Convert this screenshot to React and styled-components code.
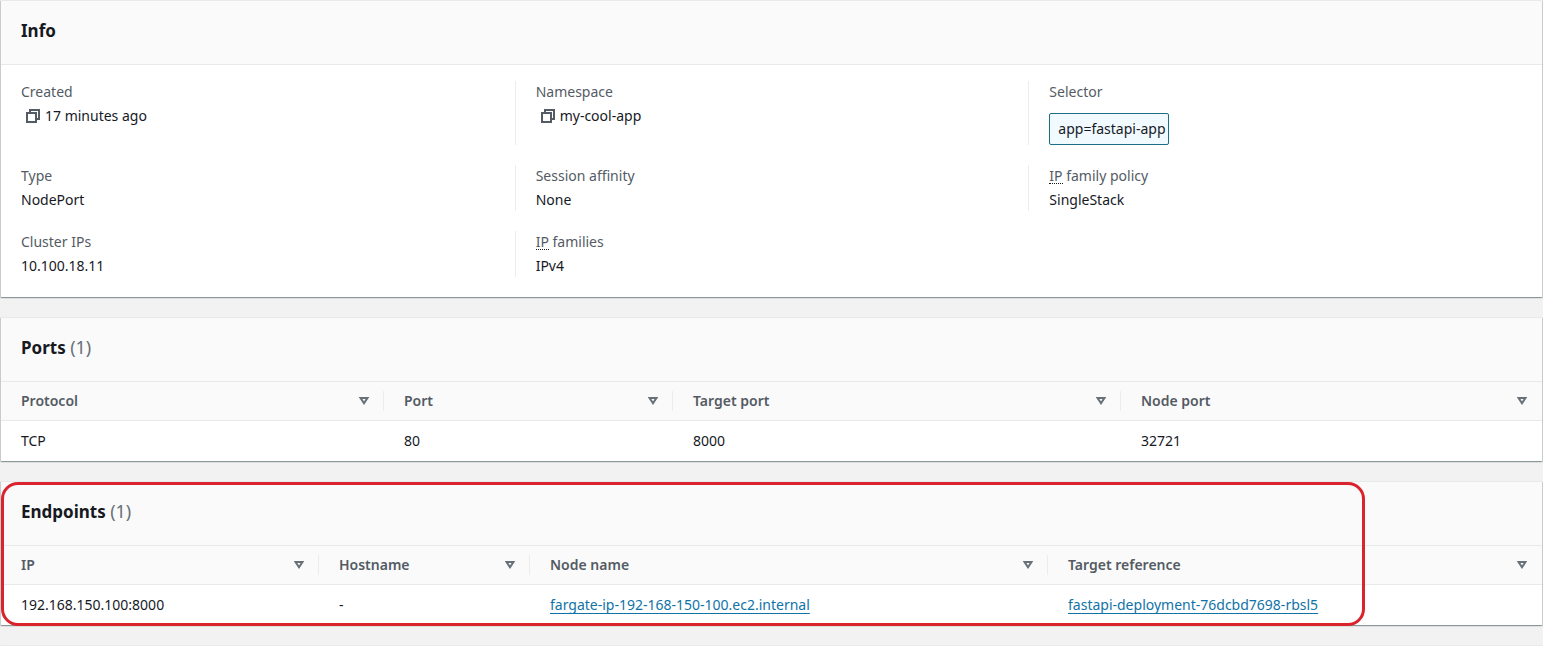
import React from "react";
import styled, { createGlobalStyle } from "styled-components";

const GlobalStyle = createGlobalStyle`
  *, *::before, *::after { box-sizing: border-box; }
  body {
    margin: 0;
    background: #f2f2f2;
    color: #16191f;
    font-family: "Noto Sans", "Open Sans", sans-serif;
    font-size: 14px;
    line-height: 22px;
  }
`;

const Page = styled.main`
  display: flex;
  flex-direction: column;
  gap: 20px;
  padding: 0 1px;
`;

const Panel = styled.section`
  position: relative;
  background: #ffffff;
  border-top: 1px solid #e8e9e9;
  box-shadow:
    0 1px 1px 0 rgba(0, 28, 36, 0.2),
    1px 1px 1px 0 rgba(0, 28, 36, 0.15),
    -1px 1px 1px 0 rgba(0, 28, 36, 0.15);
`;

const PanelHeader = styled.header`
  display: flex;
  align-items: center;
  height: 64px;
  padding: 0 20px 4px;
  background: #fafafa;
  border-bottom: 1px solid #e8e9e9;
`;

const Title = styled.h2`
  margin: 0;
  font-size: 17px;
  line-height: 22px;
  font-weight: 700;
`;

const Count = styled.span`
  color: #687078;
  font-size: 18px;
  font-weight: 400;
`;

const Details = styled.dl`
  display: grid;
  grid-template-columns: repeat(3, 1fr);
  row-gap: 20px;
  margin: 0;
  padding: 16px 0 20px;
`;

const Detail = styled.div`
  display: flex;
  flex-direction: column;
  gap: 2px;
  padding: 0 20px;
  border-left: ${(p) => (p.$divided ? "1px solid #eaeded" : "0")};
`;

const Label = styled.dt`
  color: #545b64;
`;

const Value = styled.dd`
  display: flex;
  align-items: center;
  gap: 5px;
  margin: 0;
`;

const Abbr = styled.abbr`
  display: inline-block;
  line-height: 14px;
  text-decoration: none;
  border-bottom: 1px dotted #16191f;
`;

const CopyButton = styled.button`
  display: flex;
  padding: 0;
  margin-left: 4px;
  border: 0;
  background: none;
  color: #545b64;
  cursor: pointer;
`;

const Tag = styled.span`
  margin-top: 8px;
  padding: 4px 2px 4px 8px;
  border: 1px solid #1b6f84;
  border-radius: 2px;
  background: #f1faff;
`;

const Table = styled.table`
  width: 100%;
  table-layout: fixed;
  border-collapse: collapse;
`;

const Col = styled.col`
  width: ${(p) => p.$share}%;
`;

const HeadCell = styled.th`
  padding: 0;
  background: #fafafa;
  border-bottom: 1px solid #e8e9e9;
  color: #545b64;
  text-align: left;
`;

const SortButton = styled.button`
  display: flex;
  align-items: center;
  justify-content: space-between;
  width: 100%;
  margin: 9px 0;
  padding: 0 ${(p) => (p.$divided ? 14 : 15)}px 0 20px;
  border: 0;
  border-right: ${(p) => (p.$divided ? "1px solid #eaeded" : "0")};
  background: none;
  color: inherit;
  font: inherit;
  font-weight: 600;
  line-height: 20px;
  cursor: pointer;
`;

const Cell = styled.td`
  padding: 9px 20px;
`;

const Link = styled.a`
  color: #0f73a8;
  text-decoration: underline 1px;
  text-underline-offset: 3px;
  text-decoration-skip-ink: none;
`;

const Highlight = styled.div`
  position: absolute;
  inset: 0 177px -1px 0;
  border: 3px solid #da242d;
  border-radius: 17px;
  pointer-events: none;
`;

function CopyIcon() {
  return (
    <svg width="15" height="16" viewBox="0 0 15 16" fill="none" stroke="currentColor" strokeWidth="2" aria-hidden="true">
      <path d="M5 5V2h9v9h-3" />
      <path d="M2 5h9v9H2z" />
    </svg>
  );
}

function SortIcon() {
  return (
    <svg width="10" height="8" viewBox="0 0 10 8" fill="none" stroke="#687078" strokeWidth="2" aria-hidden="true">
      <path d="M1.6 1h6.8L5 6.2z" />
    </svg>
  );
}

function Copyable({ name, children }) {
  return (
    <Value>
      <CopyButton type="button" aria-label={`Copy ${name}`}>
        <CopyIcon />
      </CopyButton>
      {children}
    </Value>
  );
}

function DataTable({ label, columns, rows }) {
  const total = columns.reduce((sum, c) => sum + c.weight, 0);
  return (
    <Table aria-label={label}>
      <colgroup>
        {columns.map((c) => (
          <Col key={c.name} $share={(c.weight / total) * 100} />
        ))}
      </colgroup>
      <thead>
        <tr>
          {columns.map((c, i) => (
            <HeadCell key={c.name} scope="col">
              <SortButton type="button" $divided={i < columns.length - 1}>
                {c.name}
                <SortIcon />
              </SortButton>
            </HeadCell>
          ))}
        </tr>
      </thead>
      <tbody>
        {rows.map((row, r) => (
          <tr key={r}>
            {row.map((cell, i) => (
              <Cell key={i}>{cell}</Cell>
            ))}
          </tr>
        ))}
      </tbody>
    </Table>
  );
}

const portColumns = [
  { name: "Protocol", weight: 383 },
  { name: "Port", weight: 289 },
  { name: "Target port", weight: 448 },
  { name: "Node port", weight: 421 },
];

const endpointColumns = [
  { name: "IP", weight: 318 },
  { name: "Hostname", weight: 211 },
  { name: "Node name", weight: 518 },
  { name: "Target reference", weight: 494 },
];

const endpointRows = [
  [
    "192.168.150.100:8000",
    "-",
    <Link href="#node">fargate-ip-192-168-150-100.ec2.internal</Link>,
    <Link href="#pod">fastapi-deployment-76dcbd7698-rbsl5</Link>,
  ],
];

export default function App() {
  return (
    <>
      <GlobalStyle />
      <Page>
        <Panel>
          <PanelHeader>
            <Title>Info</Title>
          </PanelHeader>
          <Details>
            <Detail>
              <Label>Created</Label>
              <Copyable name="created time">17 minutes ago</Copyable>
            </Detail>
            <Detail $divided>
              <Label>Namespace</Label>
              <Copyable name="namespace">my-cool-app</Copyable>
            </Detail>
            <Detail $divided>
              <Label>Selector</Label>
              <Value>
                <Tag>app=fastapi-app</Tag>
              </Value>
            </Detail>
            <Detail>
              <Label>Type</Label>
              <Value>NodePort</Value>
            </Detail>
            <Detail $divided>
              <Label>Session affinity</Label>
              <Value>None</Value>
            </Detail>
            <Detail $divided>
              <Label>
                <Abbr>IP</Abbr> family policy
              </Label>
              <Value>SingleStack</Value>
            </Detail>
            <Detail>
              <Label>Cluster IPs</Label>
              <Value>10.100.18.11</Value>
            </Detail>
            <Detail $divided>
              <Label>
                <Abbr>IP</Abbr> families
              </Label>
              <Value>IPv4</Value>
            </Detail>
          </Details>
        </Panel>

        <Panel>
          <PanelHeader>
            <Title>
              Ports <Count>(1)</Count>
            </Title>
          </PanelHeader>
          <DataTable label="Ports" columns={portColumns} rows={[["TCP", "80", "8000", "32721"]]} />
        </Panel>

        <Panel>
          <PanelHeader>
            <Title>
              Endpoints <Count>(1)</Count>
            </Title>
          </PanelHeader>
          <DataTable label="Endpoints" columns={endpointColumns} rows={endpointRows} />
          <Highlight />
        </Panel>

        <Panel />
      </Page>
    </>
  );
}
